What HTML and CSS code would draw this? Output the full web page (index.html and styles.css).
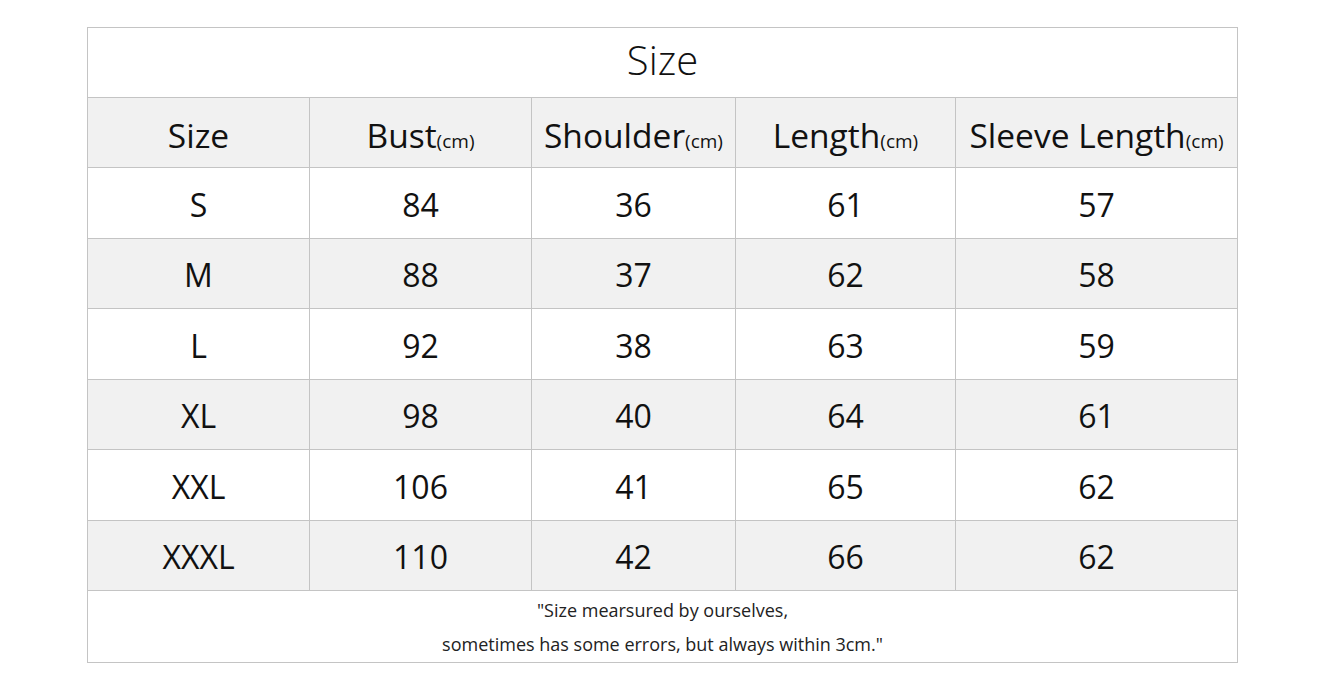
FILE: index.html
```html
<!DOCTYPE html>
<html>
<head>
<meta charset="utf-8">
<link rel="stylesheet" href="styles.css">
</head>
<body>
<table class="chart">
  <colgroup>
    <col class="c1"><col class="c2"><col class="c3"><col class="c4"><col class="c5">
  </colgroup>
  <tr class="title"><td colspan="5">Size</td></tr>
  <tr class="head">
    <td>Size</td>
    <td>Bust<span class="unit">(cm)</span></td>
    <td>Shoulder<span class="unit">(cm)</span></td>
    <td>Length<span class="unit">(cm)</span></td>
    <td>Sleeve Length<span class="unit">(cm)</span></td>
  </tr>
  <tr><td>S</td><td>84</td><td>36</td><td>61</td><td>57</td></tr>
  <tr class="alt"><td>M</td><td>88</td><td>37</td><td>62</td><td>58</td></tr>
  <tr><td>L</td><td>92</td><td>38</td><td>63</td><td>59</td></tr>
  <tr class="alt"><td>XL</td><td>98</td><td>40</td><td>64</td><td>61</td></tr>
  <tr><td>XXL</td><td>106</td><td>41</td><td>65</td><td>62</td></tr>
  <tr class="alt"><td>XXXL</td><td>110</td><td>42</td><td>66</td><td>62</td></tr>
  <tr class="note"><td colspan="5"><p>"Size mearsured by ourselves,</p><p>sometimes has some errors, but always within 3cm."</p></td></tr>
</table>
</body>
</html>
```
FILE: styles.css
```css
html, body { margin: 0; padding: 0; background: #fff; }
body { padding: 27px 0 0 87px; font-family: "Open Sans", "Noto Sans", sans-serif; color: #111; }
.chart { border-collapse: collapse; table-layout: fixed; width: 1150px; }
.c1 { width: 222px; } .c2 { width: 222px; } .c3 { width: 204px; } .c4 { width: 220px; } .c5 { width: 282px; }
.chart td { border: 1px solid #c4c4c4; text-align: center; padding: 3px 0 0; height: 66.5px; font-size: 32px; white-space: nowrap; }
.title td { font-size: 40px; font-weight: 300; height: 63px; padding: 0 0 6px; }
.head td { font-size: 33.5px; padding: 5px 0 0; height: 64px; }
.head td, .alt td { background: #f1f1f1; }
.unit { font-size: 19px; }
.note td { height: 70px; padding: 1px 0 0; font-size: 18px; color: #222; }
.note p { margin: 0; line-height: 34.5px; }
```
